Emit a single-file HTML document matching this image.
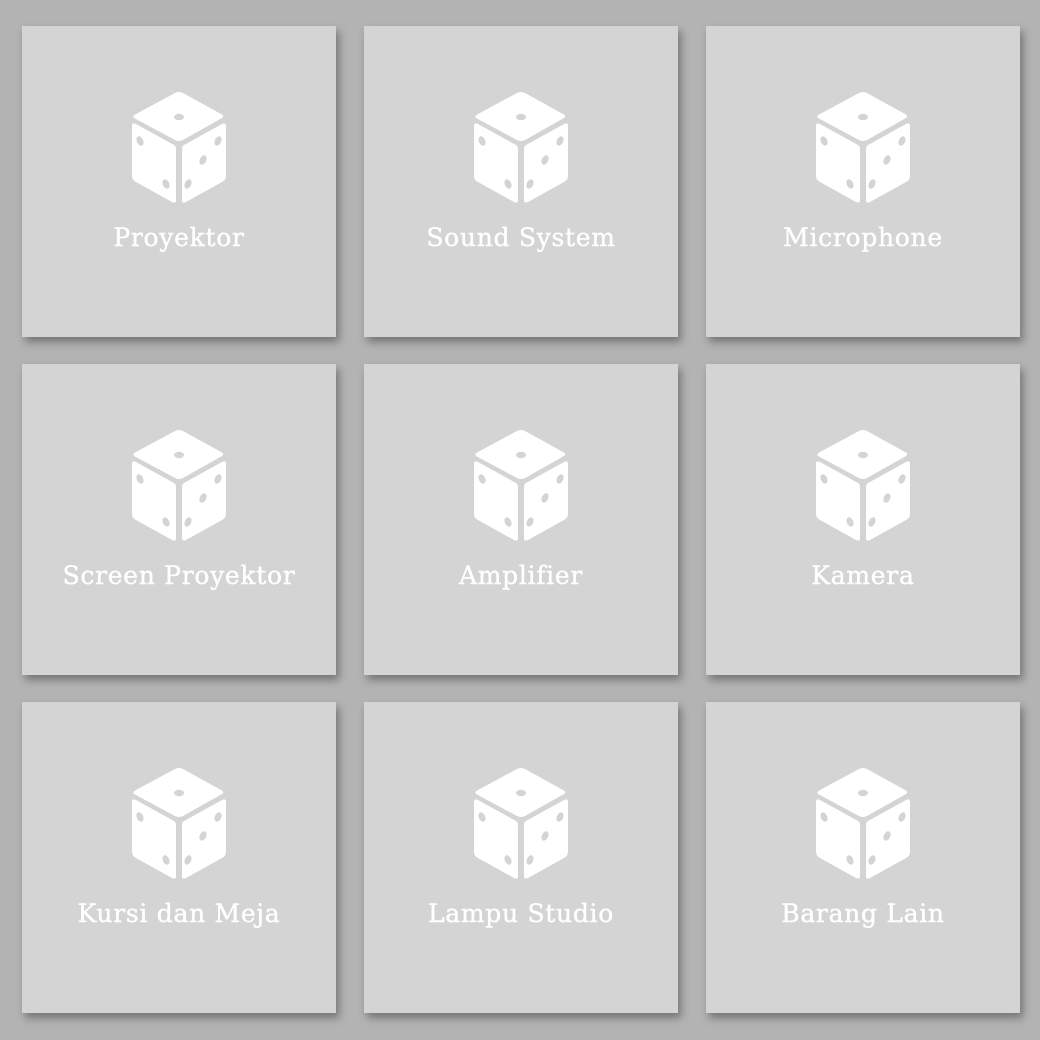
<!DOCTYPE html><html><head><style>
body{margin:0;width:1040px;height:1040px;background:#b3b3b3;position:relative;overflow:hidden;font-family:"DejaVu Serif",serif}
.t{position:absolute;width:314px;height:311px;background:#d4d4d4;box-shadow:3px 5px 8px rgba(0,0,0,.35)}
.t svg{position:absolute;left:86px;top:64px}
.t span{position:absolute;left:0;right:0;top:197px;text-align:center;color:#fff;font-size:25px;letter-spacing:0.7px;-webkit-text-stroke:0.4px #fff}
</style></head><body>
<svg width="0" height="0" style="position:absolute"><defs><g id="d">
<path d="M26,28 Q24,26 28,24 L67,3 Q71,1 75,3 L113,24 Q117,26 114,28 L75,50 Q71,52 67,50 Z" fill="#fff"/>
<path d="M24,36 Q24,32 28,34 L66,55 Q68,56 68,60 L68,110 Q68,114 64,112 L28,92 Q24,90 24,86 Z" fill="#fff"/>
<path d="M118,36 Q118,32 114,34 L76,55 Q74,56 74,60 L74,110 Q74,114 78,112 L114,92 Q118,90 118,86 Z" fill="#fff"/>
<g fill="#d4d4d4"><ellipse cx="71" cy="27" rx="5" ry="3.2"/>
<ellipse cx="32" cy="51" rx="3.2" ry="5" transform="rotate(-25 32 51)"/>
<ellipse cx="58" cy="94" rx="3.2" ry="5" transform="rotate(-25 58 94)"/>
<ellipse cx="110" cy="51" rx="3.2" ry="5" transform="rotate(25 110 51)"/>
<ellipse cx="95" cy="70" rx="3.2" ry="5" transform="rotate(25 95 70)"/>
<ellipse cx="80" cy="94" rx="3.2" ry="5" transform="rotate(25 80 94)"/></g></g></defs></svg>
<div class="t" style="left:22px;top:26px"><svg width="142" height="125"><use href="#d"/></svg><span>Proyektor</span></div>
<div class="t" style="left:364px;top:26px"><svg width="142" height="125"><use href="#d"/></svg><span>Sound System</span></div>
<div class="t" style="left:706px;top:26px"><svg width="142" height="125"><use href="#d"/></svg><span>Microphone</span></div>
<div class="t" style="left:22px;top:364px"><svg width="142" height="125"><use href="#d"/></svg><span>Screen Proyektor</span></div>
<div class="t" style="left:364px;top:364px"><svg width="142" height="125"><use href="#d"/></svg><span>Amplifier</span></div>
<div class="t" style="left:706px;top:364px"><svg width="142" height="125"><use href="#d"/></svg><span>Kamera</span></div>
<div class="t" style="left:22px;top:702px"><svg width="142" height="125"><use href="#d"/></svg><span>Kursi dan Meja</span></div>
<div class="t" style="left:364px;top:702px"><svg width="142" height="125"><use href="#d"/></svg><span>Lampu Studio</span></div>
<div class="t" style="left:706px;top:702px"><svg width="142" height="125"><use href="#d"/></svg><span>Barang Lain</span></div>
</body></html>
